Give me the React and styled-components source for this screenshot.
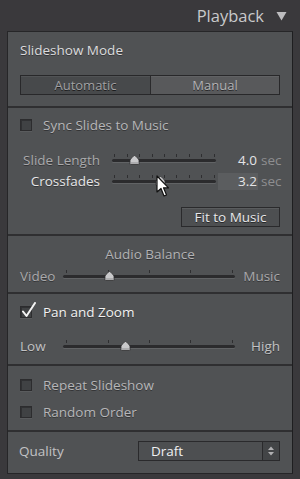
import React from "react";
import styled, { createGlobalStyle } from "styled-components";

const Global = createGlobalStyle`
  html, body {
    margin: 0;
    padding: 0;
    background: #3a393c;
  }
  body {
    font-family: "Open Sans", "DejaVu Sans", sans-serif;
    -webkit-font-smoothing: antialiased;
  }
`;

const Page = styled.div`
  position: relative;
  width: 300px;
  height: 479px;
  overflow: hidden;
  background: #3a393c;
`;

const Header = styled.div`
  height: 31px;
  display: flex;
  align-items: center;
  justify-content: flex-end;
  gap: 12px;
  padding-right: 13px;
  box-sizing: border-box;
  color: #c9c9cb;
  font-size: 16.5px;
`;

const Panel = styled.div`
  margin: 0 7px;
  background: #505254;
  border: 1px solid #262628;
  border-right-color: #1e1e20;
`;

const Section = styled.div`
  display: flex;
  flex-direction: column;
  padding: ${(p) => p.$pad || "0 12px"};
  gap: ${(p) => p.$gap || "0px"};
  border-top: ${(p) => (p.$first ? "none" : "2px solid #2f2f31")};
  box-sizing: border-box;
`;

const Title = styled.div`
  height: 20px;
  line-height: 20px;
  font-size: 13.5px;
  color: ${(p) => p.$color || "#dcdcde"};
  text-align: ${(p) => (p.$center ? "center" : "left")};
  text-shadow: 0 1px 0 rgba(0, 0, 0, 0.35);
`;

const Segmented = styled.div`
  display: grid;
  grid-template-columns: 129px 1fr;
  height: 20px;
  border: 1px solid #28282a;
  box-sizing: border-box;
`;

const Segment = styled.div`
  display: flex;
  align-items: center;
  justify-content: center;
  font-size: 13px;
  color: ${(p) => (p.$on ? "#b4b4b6" : "#a2a2a4")};
  background: ${(p) => (p.$on ? "#58595b" : "#47494b")};
  border-left: ${(p) => (p.$on ? "1px solid #2a2a2c" : "none")};
  box-shadow: inset 0 1px 0 rgba(255, 255, 255, 0.06);
  text-shadow: 0 1px 0 rgba(0, 0, 0, 0.6);
`;

const CheckRow = styled.div`
  display: flex;
  align-items: center;
  height: 20px;
  gap: 11px;
  font-size: 13.5px;
  color: ${(p) => (p.$checked ? "#f2f2f2" : "#b6b6b8")};
  text-shadow: 0 1px 0 rgba(0, 0, 0, 0.35);
`;

const Box = styled.div`
  position: relative;
  width: 12px;
  height: 12px;
  box-sizing: border-box;
  border: 1px solid #2c2c2e;
  background: #404244;
  box-shadow: inset 1px 1px 0 rgba(0, 0, 0, 0.25), 0 1px 0 rgba(255, 255, 255, 0.06);
  > svg {
    position: absolute;
    left: 0px;
    top: -5px;
  }
`;

const SliderRow = styled.div`
  display: grid;
  grid-template-columns: 92px 104px 42px 1fr;
  align-items: center;
  height: 20px;
  font-size: 13.5px;
`;

const Label = styled.div`
  text-align: right;
  padding-right: 12px;
  color: ${(p) => (p.$bright ? "#e6e6e8" : "#a9a9ab")};
  text-shadow: 0 1px 0 rgba(0, 0, 0, 0.35);
  white-space: nowrap;
`;

const Value = styled.div`
  height: 17px;
  line-height: 17px;
  margin-left: 2px;
  text-align: right;
  padding-right: 1px;
  color: #e4e4e6;
  font-size: 13.5px;
  background: ${(p) => (p.$active ? "#5b5d5f" : "transparent")};
`;

const Unit = styled.div`
  color: #8e8e90;
  font-size: 13.5px;
  padding-left: 3px;
`;

const TrackWrap = styled.div`
  position: relative;
  height: 20px;
`;

const Track = styled.div`
  position: absolute;
  left: 0;
  right: 0;
  top: 9px;
  height: 3px;
  border-radius: 2px;
  background: #2b2b2d;
  box-shadow: 0 1px 0 rgba(255, 255, 255, 0.1);
`;

const Tick = styled.div`
  position: absolute;
  top: 4px;
  width: 1px;
  height: 3px;
  background: #2e2e30;
`;

const Thumb = styled.svg`
  position: absolute;
  top: 5px;
  margin-left: -5px;
`;

const BalanceRow = styled.div`
  display: grid;
  grid-template-columns: 35px 1fr 37px;
  column-gap: 8px;
  align-items: center;
  height: 20px;
  font-size: 13.5px;
  color: ${(p) => p.$color || "#a9a9ab"};
  text-shadow: 0 1px 0 rgba(0, 0, 0, 0.35);
  > span:last-child {
    text-align: right;
  }
`;

const ButtonRow = styled.div`
  display: flex;
  justify-content: flex-end;
`;

const Button = styled.div`
  width: 99px;
  height: 20px;
  box-sizing: border-box;
  display: flex;
  align-items: center;
  justify-content: center;
  font-size: 13.5px;
  color: #e8e8ea;
  background: #4d4f51;
  border: 1px solid #2a2a2c;
  box-shadow: inset 0 1px 0 rgba(255, 255, 255, 0.08);
  text-shadow: 0 1px 0 rgba(0, 0, 0, 0.5);
`;

const QualityRow = styled.div`
  display: flex;
  align-items: center;
  justify-content: space-between;
  height: 20px;
  font-size: 13.5px;
  color: #c2c2c4;
  > span {
    margin-left: -1px;
  }
`;

const Select = styled.div`
  width: 142px;
  height: 20px;
  box-sizing: border-box;
  display: grid;
  grid-template-columns: 1fr 17px;
  border: 1px solid #2a2a2c;
  background: #4d4f51;
  > div:first-child {
    padding-left: 12px;
    line-height: 18px;
    color: #f0f0f2;
  }
  > div:last-child {
    border-left: 1px solid #2a2a2c;
    background: #434547;
    display: flex;
    align-items: center;
    justify-content: center;
  }
`;

const Cursor = styled.svg`
  position: absolute;
  left: 156px;
  top: 175px;
`;

const ThumbIcon = ({ at }) => (
  <Thumb width="11" height="10" viewBox="0 0 11 10" style={{ left: at }}>
    <path d="M5.5 0.5 Q7 0.5 10 5 L10 9 Q10 9.5 9.5 9.5 L1.5 9.5 Q1 9.5 1 9 L1 5 Q4 0.5 5.5 0.5 Z" fill="#c9c9cb" stroke="#2e2e30" strokeWidth="0.8" />
    <path d="M1.5 8 L9.5 8" stroke="#8e8e90" strokeWidth="1" />
  </Thumb>
);

const Slider = ({ ticks, thumb }) => (
  <TrackWrap>
    {ticks.map((t) => (
      <Tick key={t} style={{ left: `${t}%` }} />
    ))}
    <Track />
    {thumb !== undefined && <ThumbIcon at={`${thumb}%`} />}
  </TrackWrap>
);

const Check = ({ checked, children }) => (
  <CheckRow $checked={checked}>
    <Box>
      {checked && (
        <svg width="16" height="17" viewBox="0 0 16 17">
          <path d="M2 9.5 L5.5 14 L14 1" fill="none" stroke="#f4f4f4" strokeWidth="2" strokeLinecap="round" strokeLinejoin="round" />
        </svg>
      )}
    </Box>
    {children}
  </CheckRow>
);

const nine = [2, 14, 26, 38, 50, 62, 74, 86, 98];
const five = [2, 26, 50, 74, 98];

export default function App() {
  return (
    <Page>
      <Global />
      <Header>
        Playback
        <svg width="11" height="10" viewBox="0 0 11 10">
          <path d="M0.5 1 L10.5 1 L5.5 9.5 Z" fill="#bdbdbf" />
        </svg>
      </Header>
      <Panel>
        <Section $first $pad="8px 12px 11px" $gap="15px">
          <Title>Slideshow Mode</Title>
          <Segmented>
            <Segment>Automatic</Segment>
            <Segment $on>Manual</Segment>
          </Segmented>
        </Section>

        <Section $pad="7px 12px 7px">
          <Check>Sync Slides to Music</Check>
          <SliderRow style={{ marginTop: 15 }}>
            <Label>Slide Length</Label>
            <Slider ticks={nine} thumb={21} />
            <Value>4.0</Value>
            <Unit>sec</Unit>
          </SliderRow>
          <SliderRow style={{ marginTop: 1 }}>
            <Label $bright>Crossfades</Label>
            <Slider ticks={nine} thumb={46} />
            <Value $active>3.2</Value>
            <Unit>sec</Unit>
          </SliderRow>
          <ButtonRow style={{ marginTop: 16 }}>
            <Button>Fit to Music</Button>
          </ButtonRow>
        </Section>

        <Section $pad="8px 12px 6px" $gap="2px">
          <Title $center $color="#b2b2b4">Audio Balance</Title>
          <BalanceRow>
            <span>Video</span>
            <Slider ticks={five} thumb={27} />
            <span>Music</span>
          </BalanceRow>
        </Section>

        <Section $pad="8px 12px 8px" $gap="14px">
          <Check checked>Pan and Zoom</Check>
          <BalanceRow $color="#c2c2c4">
            <span>Low</span>
            <Slider ticks={five} thumb={36} />
            <span>High</span>
          </BalanceRow>
        </Section>

        <Section $pad="9px 12px 8px" $gap="7px">
          <Check>Repeat Slideshow</Check>
          <Check>Random Order</Check>
        </Section>

        <Section $pad="9px 12px 12px">
          <QualityRow>
            <span>Quality</span>
            <Select>
              <div>Draft</div>
              <div>
                <svg width="8" height="12" viewBox="0 0 8 12">
                  <path d="M1 5 L4 1.5 L7 5 Z M1 7 L4 10.5 L7 7 Z" fill="#b0b0b2" />
                </svg>
              </div>
            </Select>
          </QualityRow>
        </Section>
      </Panel>
      <Cursor width="14" height="24" viewBox="0 0 14 24">
        <path d="M1 1 L1 17 L5 13.5 L8 21 L10.5 20 L7.5 12.8 L12.5 12.8 Z" fill="#ffffff" stroke="#111111" strokeWidth="1.2" strokeLinejoin="round" />
      </Cursor>
    </Page>
  );
}
